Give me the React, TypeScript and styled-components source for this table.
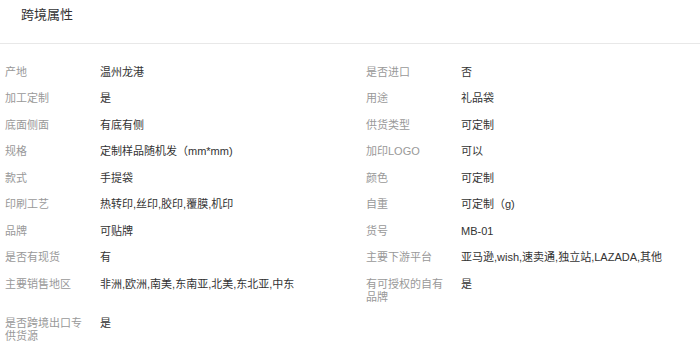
import React from 'react';
import styled, { createGlobalStyle } from 'styled-components';

const GlobalStyle = createGlobalStyle`
    body {
        margin: 0;
        background: #fff;
        font-family: "Liberation Sans", "Noto Sans CJK SC", sans-serif;
    }
`

const Panel = styled.div`
    width: 700px;
    background: #fff;
`
const Header = styled.div`
    height: 44px;
    box-sizing: border-box;
    padding: 8px 21px 0;
    font-size: 13px;
    line-height: 13px;
    color: #333;
    border-bottom: 1px solid #e8e8e8;
`
const AttrGrid = styled.div`
    display: grid;
    grid-template-columns: 361px 1fr;
    padding: 15px 0 0 5px;
`
const Item = styled.div`
    display: flex;
    padding: 6.75px 0;
    font-size: 11px;
    line-height: 13px;
`
const Label = styled.div`
    flex: 0 0 85px;
    margin-right: 10px;
    color: #999;
`
const Value = styled.div`
    flex: 1;
    color: #333;
`

const attrs: [string, string][] = [
    ["产地", "温州龙港"],
    ["是否进口", "否"],
    ["加工定制", "是"],
    ["用途", "礼品袋"],
    ["底面侧面", "有底有侧"],
    ["供货类型", "可定制"],
    ["规格", "定制样品随机发（mm*mm)"],
    ["加印LOGO", "可以"],
    ["款式", "手提袋"],
    ["颜色", "可定制"],
    ["印刷工艺", "热转印,丝印,胶印,覆膜,机印"],
    ["自重", "可定制（g)"],
    ["品牌", "可贴牌"],
    ["货号", "MB-01"],
    ["是否有现货", "有"],
    ["主要下游平台", "亚马逊,wish,速卖通,独立站,LAZADA,其他"],
    ["主要销售地区", "非洲,欧洲,南美,东南亚,北美,东北亚,中东"],
    ["有可授权的自有品牌", "是"],
    ["是否跨境出口专供货源", "是"],
];

export default function App() {
    return (
        <>
            <GlobalStyle />
            <Panel>
                <Header>跨境属性</Header>
                <AttrGrid>
                    {attrs.map(([label, value], index) => (
                        <Item key={index}>
                            <Label>{label}</Label>
                            <Value>{value}</Value>
                        </Item>
                    ))}
                </AttrGrid>
            </Panel>
        </>
    );
}
